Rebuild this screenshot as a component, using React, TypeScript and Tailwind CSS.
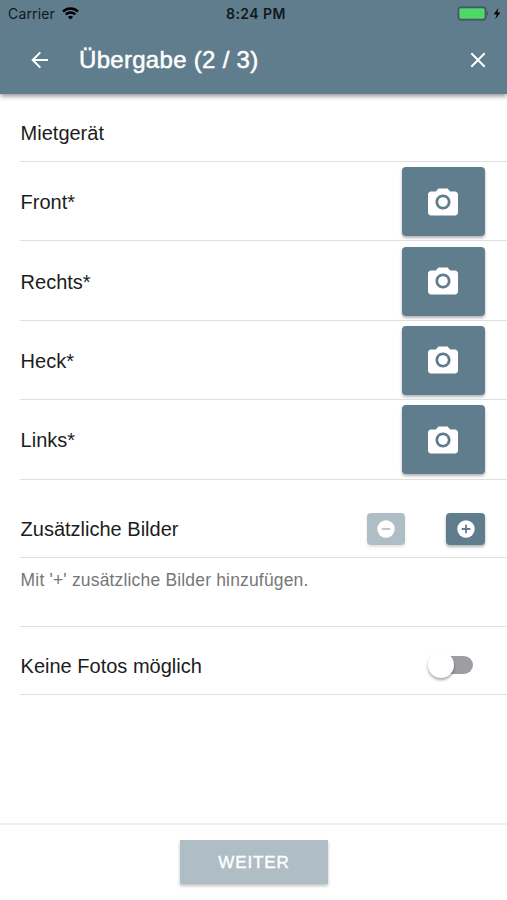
import { useState } from 'react';

const photos = ['Front*', 'Rechts*', 'Heck*', 'Links*'];

function StatusBar() {
  return (
    <div className="relative h-7 flex items-center justify-between pl-2 pr-[6px] font-['Inter',sans-serif] text-[14px] leading-none text-[#10181c]">
      <div className="flex items-center gap-[7px]">
        <span className="tracking-[0.15px]">Carrier</span>
        <svg className="w-[17px] h-[13px] -mt-px" viewBox="0 0 17 13" fill="none" stroke="#000" strokeWidth="2.3">
          <path d="M1 4.6a10.6 10.6 0 0 1 15 0" />
          <path d="M3.7 7.5a6.8 6.8 0 0 1 9.6 0" />
          <path d="M8.5 12.6 5.9 10a3.7 3.7 0 0 1 5.2 0Z" fill="#000" stroke="none" />
        </svg>
      </div>
      <span className="absolute left-[226px] top-[7px] font-semibold text-[14px] tracking-[0.45px] whitespace-nowrap">8:24 PM</span>
      <svg className="w-[44px] h-[15px] -mt-[2px]" viewBox="0 0 44 15">
        <rect x="1.2" y="1.2" width="27.6" height="12.6" rx="2.8" fill="none" stroke="#3d5059" strokeWidth="1.2" />
        <rect x="2.6" y="2.6" width="24.8" height="9.8" rx="1.4" fill="#4cd964" />
        <path d="M30 5.5c1.4.4 1.4 3.6 0 4Z" fill="#3d5059" />
        <path d="M41.4 1.8 36.8 8.3h3l-1.6 5L43.4 6.6h-3.1Z" fill="#000" />
      </svg>
    </div>
  );
}

function CameraIcon() {
  return (
    <svg className="w-9 h-9" viewBox="0 0 24 24" fill="#fff">
      <circle cx="12" cy="12" r="3.2" />
      <path d="M9 3 7.17 5H4c-1.1 0-2 .9-2 2v12c0 1.1.9 2 2 2h16c1.1 0 2-.9 2-2V7c0-1.1-.9-2-2-2h-3.17L15 3H9zm3 14c-2.76 0-5-2.24-5-5s2.24-5 5-5 5 2.24 5 5-2.24 5-5 5z" />
    </svg>
  );
}

export default function App() {
  const [noPhotos, setNoPhotos] = useState(false);

  return (
    <div className="w-full h-[900px] flex flex-col bg-white overflow-hidden font-['Liberation_Sans',Arial,sans-serif] text-[20px] text-[#1c1c1c]">
      <header className="relative h-[94px] shrink-0 bg-[#607d8d] shadow-[0_2px_5px_rgba(0,0,0,0.45)]">
        <StatusBar />
        <div className="h-16 flex items-center pl-[31px] pr-5 text-white">
          <svg className="w-[18px] h-[18px]" viewBox="0 0 18 18" fill="none" stroke="currentColor" strokeWidth="2">
            <path d="M17 9H2.5M9.3 1.4 1.7 9l7.6 7.6" />
          </svg>
          <h1 className="ml-[30px] text-[24px] tracking-[0.3px] [-webkit-text-stroke:0.5px_white]">Übergabe (2 / 3)</h1>
          <svg className="ml-auto w-[18px] h-[18px]" viewBox="0 0 18 18" fill="none" stroke="currentColor" strokeWidth="2">
            <path d="m2.3 2.3 13.4 13.4m0-13.4L2.3 15.7" />
          </svg>
        </div>
      </header>

      <main className="flex-1 pl-5">
        <div className="h-[68px] pl-[0.6px] pt-[11px] flex items-center border-b border-[#e0e0e0]">Mietgerät</div>

        {photos.map((label) => (
          <div key={label} className="h-[79.4px] pl-[0.6px] pt-px pr-[22px] flex items-center justify-between border-b border-[#e0e0e0]">
            <span className="pt-px">{label}</span>
            <button aria-label={label} className="w-[83px] h-[69px] pr-px rounded-[4px] flex items-center justify-center bg-[#607d8d] shadow-[0_2px_3px_rgba(0,0,0,0.3)]">
              <CameraIcon />
            </button>
          </div>
        ))}

        {/* Additional pictures */}
        <div className="h-[78px] pl-[0.6px] pt-[21px] pr-[22px] flex items-center border-b border-[#e0e0e0]">
          <span className="flex-1 pt-px">Zusätzliche Bilder</span>
          <button disabled aria-label="-" className="w-[38px] h-8 rounded-[4px] flex items-center justify-center bg-[#afbec5] shadow-[0_2px_3px_rgba(0,0,0,0.12)]">
            <svg className="w-[18px] h-[18px]" viewBox="0 0 18 18">
              <circle cx="9" cy="9" r="8.7" fill="#fff" />
              <path d="M4.7 9h8.6" stroke="#afbec5" strokeWidth="1.7" />
            </svg>
          </button>
          <button aria-label="+" className="ml-[41px] w-[39px] h-8 rounded-[4px] flex items-center justify-center bg-[#607d8d] shadow-[0_2px_3px_rgba(0,0,0,0.3)]">
            <svg className="w-[18px] h-[18px]" viewBox="0 0 18 18">
              <circle cx="9" cy="9" r="8.7" fill="#fff" />
              <path d="M4.7 9h8.6M9 4.7v8.6" stroke="#607d8d" strokeWidth="1.8" />
            </svg>
          </button>
        </div>
        <p className="h-[69px] pl-[0.6px] pt-[10px] border-b border-[#e0e0e0] text-[17.5px] leading-6 tracking-[0.17px] text-[#777]">
          Mit '+' zusätzliche Bilder hinzufügen.
        </p>

        <div className="h-[68px] pl-[0.6px] pt-[10px] pr-[34px] flex items-center justify-between border-b border-[#e0e0e0]">
          <span className="pt-[2px]">Keine Fotos möglich</span>
          <button
            role="switch"
            aria-checked={noPhotos}
            onClick={() => setNoPhotos(!noPhotos)}
            className="relative w-[39px] h-[18px] rounded-full bg-[#9e9ea2]"
          >
            <span
              className={`absolute -top-1 w-[26px] h-[26px] rounded-full bg-white shadow-[0_2px_3px_rgba(0,0,0,0.35)] ${noPhotos ? 'right-[-6px]' : 'left-[-6px]'}`}
            />
          </button>
        </div>
      </main>

      <footer className="h-[77px] shrink-0 pt-[15px] flex justify-center items-start border-t-2 border-[#efefef]">
        <button className="ml-px w-[148px] h-11 pt-px bg-[#afbec5] text-white text-[17px] tracking-[0.9px] [-webkit-text-stroke:0.4px_white] shadow-[0_2px_3px_rgba(0,0,0,0.25)]">
          WEITER
        </button>
      </footer>
    </div>
  );
}
